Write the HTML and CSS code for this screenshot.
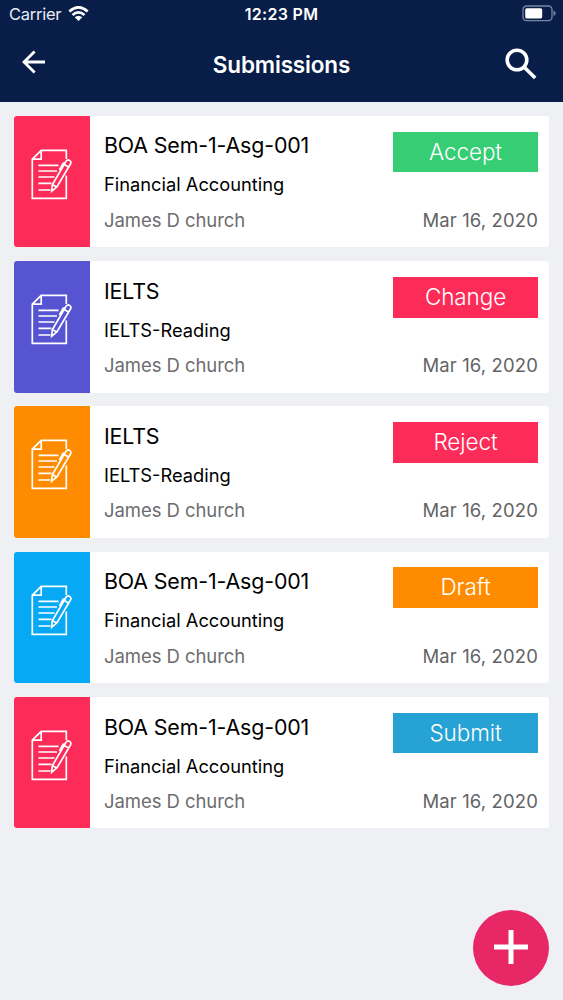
FILE: index.html
```html
<!DOCTYPE html>
<html lang="en">
<head>
    <meta charset="UTF-8">
    <meta name="viewport" content="width=device-width, initial-scale=1.0">
    <title>Submissions</title>
    <link rel="stylesheet" href="styles.css">
</head>
<body>
    <!-- Shared icon for every submission -->
    <svg class="sprite" width="0" height="0" aria-hidden="true">
        <symbol id="icon-paper" viewBox="0 0 42 52">
            <path d="M36.3 11V2.3H11.2L2.3 11.2V50.3H36.3V27.5M11.2 2.3V11.2H2.3"/>
            <path d="M8.5 17.3H28.5M8.5 23H27M8.5 29H24.5M8.5 35.3H21.5M8.5 42H20.5"/>
            <path d="M36 13.2Q37.6 11.2 39.6 12.4Q41.6 13.8 40.6 15.8L27 38.8L21.7 43.2L22.3 36.8ZM34.2 16.4L39 19.2M22.6 36.8L26.8 39M29.4 21.8L33.2 15.2L35.2 15.6"/>
        </symbol>
    </svg>

    <header class="header">
        <div class="status-bar">
            <div class="carrier">
                <span>Carrier</span>
                <svg class="wifi" viewBox="0 0 21 15">
                    <path d="M1.3 5.4Q10.5 -2.6 19.7 5.4M4.5 9Q10.5 3.8 16.5 9"/>
                    <path class="dot" d="M6.7 11.2Q10.5 8.2 14.3 11.2L10.5 15Z"/>
                </svg>
            </div>
            <span class="time">12:23 PM</span>
            <svg class="battery" viewBox="0 0 34 17">
                <rect class="shell" x="1" y="1" width="29" height="14.6" rx="3.6"/>
                <rect x="3.2" y="3.2" width="17" height="10.2" rx="1.6"/>
                <path class="cap" d="M31.5 5.6Q33.6 6.4 33.6 8.3T31.5 11Z"/>
            </svg>
        </div>
        <nav class="nav-bar">
            <button class="icon-button" aria-label="Back">
                <svg class="back" viewBox="0 0 24 24">
                    <path d="M12.6 1.4L2 12L12.6 22.6M2 12H23"/>
                </svg>
            </button>
            <h1>Submissions</h1>
            <button class="icon-button" aria-label="Search">
                <svg class="search" viewBox="0 0 32 32">
                    <circle cx="12" cy="12" r="9.8"/>
                    <path d="M19.3 19.3L30.2 30"/>
                </svg>
            </button>
        </nav>
    </header>

    <main class="submission-list">
        <article class="card">
            <div class="card-icon red"><svg><use href="#icon-paper"/></svg></div>
            <div class="card-info">
                <h2>BOA Sem-1-Asg-001</h2>
                <p class="subject">Financial Accounting</p>
                <p class="author">James D church</p>
            </div>
            <div class="card-side">
                <span class="status accept">Accept</span>
                <time>Mar 16, 2020</time>
            </div>
        </article>

        <article class="card">
            <div class="card-icon purple"><svg><use href="#icon-paper"/></svg></div>
            <div class="card-info">
                <h2>IELTS</h2>
                <p class="subject">IELTS-Reading</p>
                <p class="author">James D church</p>
            </div>
            <div class="card-side">
                <span class="status red">Change</span>
                <time>Mar 16, 2020</time>
            </div>
        </article>

        <article class="card">
            <div class="card-icon orange"><svg><use href="#icon-paper"/></svg></div>
            <div class="card-info">
                <h2>IELTS</h2>
                <p class="subject">IELTS-Reading</p>
                <p class="author">James D church</p>
            </div>
            <div class="card-side">
                <span class="status red">Reject</span>
                <time>Mar 16, 2020</time>
            </div>
        </article>

        <article class="card">
            <div class="card-icon blue"><svg><use href="#icon-paper"/></svg></div>
            <div class="card-info">
                <h2>BOA Sem-1-Asg-001</h2>
                <p class="subject">Financial Accounting</p>
                <p class="author">James D church</p>
            </div>
            <div class="card-side">
                <span class="status orange">Draft</span>
                <time>Mar 16, 2020</time>
            </div>
        </article>

        <article class="card">
            <div class="card-icon red"><svg><use href="#icon-paper"/></svg></div>
            <div class="card-info">
                <h2>BOA Sem-1-Asg-001</h2>
                <p class="subject">Financial Accounting</p>
                <p class="author">James D church</p>
            </div>
            <div class="card-side">
                <span class="status submit">Submit</span>
                <time>Mar 16, 2020</time>
            </div>
        </article>
    </main>

    <button class="add-button" aria-label="Add submission">
        <svg viewBox="0 0 34 34"><path d="M17 0V34M0 17H34"/></svg>
    </button>
</body>
</html>
```
FILE: styles.css
```css
* {
    box-sizing: border-box;
}

body {
    font-family: Inter, "Liberation Sans", sans-serif;
    background-color: #eff0f4;
    margin: 0;
    min-height: 100vh;
    color: #000;
}

h1, h2, p {
    margin: 0;
    font-weight: 400;
}

svg {
    display: block;
    fill: none;
}

.sprite {
    position: absolute;
}

/* Header */
.header {
    height: 102px;
    background-color: #081e49;
    color: #fff;
}

.status-bar {
    display: grid;
    grid-template-columns: 1fr auto 1fr;
    align-items: center;
    height: 28px;
    padding: 0 7px 0 9px;
}

.carrier {
    display: flex;
    align-items: center;
    gap: 7px;
    font-size: 16.5px;
    letter-spacing: -0.25px;
    color: #e6edf7;
}

.wifi {
    width: 21px;
    height: 15px;
    margin-top: -1px;
    stroke: #fff;
    stroke-width: 2.7;
}

.wifi .dot {
    fill: #fff;
    stroke: none;
}

.time {
    margin-right: 2px;
    font-size: 16px;
    font-weight: 600;
    letter-spacing: 0.3px;
}

.battery {
    width: 34px;
    height: 17px;
    margin-top: -1px;
    justify-self: end;
    fill: #fff;
}

.battery .shell {
    fill: none;
    stroke: #7886a2;
    stroke-width: 1.3;
}

.battery .cap {
    fill: #7886a2;
}

.nav-bar {
    display: flex;
    justify-content: space-between;
    align-items: center;
    height: 74px;
    padding: 0 26px 0 22px;
}

.nav-bar h1 {
    padding-left: 4px;
    font-size: 22.5px;
    line-height: 28px;
    font-weight: 600;
    letter-spacing: -0.15px;
}

.icon-button {
    width: 32px;
    padding: 0;
    border: none;
    background: none;
    cursor: pointer;
}

.icon-button svg {
    stroke: #fff;
}

.back {
    width: 24px;
    height: 24px;
    margin-top: -6px;
    stroke-width: 2.8;
}

.search {
    width: 32px;
    height: 32px;
    margin-top: -3px;
    stroke-width: 3.6;
}

/* Submissions */
.submission-list {
    display: flex;
    flex-direction: column;
    gap: 13.8px;
    padding: 13.8px 14px;
}

.card {
    display: flex;
    height: 131.5px;
    background-color: #fff;
    border-radius: 3px;
    overflow: hidden;
}

.card-icon {
    width: 76px;
    padding: 32px 0 0 16px;
}

.card-icon svg {
    width: 42px;
    height: 52px;
    stroke: #fff;
    stroke-width: 1.7;
}

.card-info {
    flex: 1;
    padding: 15.7px 0 0 14px;
    white-space: nowrap;
}

.card-info h2 {
    font-size: 21.4px;
    line-height: 28px;
    letter-spacing: -0.15px;
}

.subject {
    margin-top: 13px;
    font-size: 18.3px;
    line-height: 24px;
}

.author {
    margin-top: 11.3px;
    font-size: 18.5px;
    line-height: 24px;
    letter-spacing: -0.06px;
    color: #6c6c6e;
}

.card-side {
    display: flex;
    flex-direction: column;
    justify-content: space-between;
    width: 156px;
    padding: 15.8px 11px 15.6px 0;
    text-align: right;
}

.card-side time {
    font-size: 18.5px;
    line-height: 24px;
    letter-spacing: 0.12px;
    color: #636366;
}

.status {
    height: 40.7px;
    font-size: 22.5px;
    line-height: 40px;
    font-weight: 350;
    letter-spacing: -0.1px;
    text-align: center;
    color: #fff;
}

.red {
    background-color: #fd2b58;
}

.purple {
    background-color: #5754d2;
}

.orange {
    background-color: #ff8c00;
}

.blue {
    background-color: #07a9f4;
}

.accept {
    background-color: #36cd75;
}

.submit {
    background-color: #26a2d4;
}

/* Floating button */
.add-button {
    position: fixed;
    right: 14px;
    bottom: 14px;
    width: 76px;
    height: 76px;
    padding: 0 0 3px;
    border: none;
    border-radius: 50%;
    background-color: #e82866;
    cursor: pointer;
}

.add-button svg {
    width: 34px;
    height: 34px;
    margin: 0 auto;
    stroke: #fff;
    stroke-width: 5;
}
```
